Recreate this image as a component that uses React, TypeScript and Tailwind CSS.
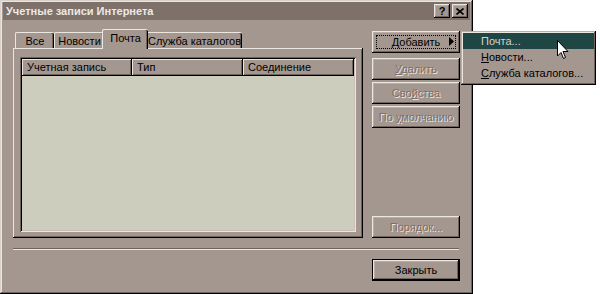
import React from "react";

const raised =
  "shadow-[inset_-1px_-1px_0_#000,inset_1px_1px_0_#ece6e0,inset_-2px_-2px_0_#6f635d,inset_2px_2px_0_#b9ada5]";

const Btn = ({
  children,
  disabled,
  className = "",
}: {
  children: React.ReactNode;
  disabled?: boolean;
  className?: string;
}) => (
  <div
    className={`flex h-[22px] w-[88px] items-center justify-center bg-[#a4978f] ${raised} ${
      disabled
        ? "text-[#7b6f69] [text-shadow:1px_1px_0_#ebe5df]"
        : "text-black"
    } ${className}`}
  >
    {children}
  </div>
);

const Tab = ({ label, w, active }: { label: string; w: string; active?: boolean }) =>
  active ? (
    <div
      className={`relative z-10 -mx-[2px] -mb-px flex h-[20px] items-start justify-center whitespace-nowrap rounded-t-[2px] border-l border-t border-[#ece6e0] bg-[#a4978f] pt-[3px] shadow-[inset_-1px_0_0_#000,inset_-2px_0_0_#6f635d] ${w}`}
    >
      {label}
    </div>
  ) : (
    <div
      className={`flex h-[16px] items-center justify-center whitespace-nowrap rounded-t-[2px] border-l border-t border-[#ece6e0] pt-[1px] shadow-[inset_-1px_0_0_#000,inset_-2px_0_0_#6f635d] ${w}`}
    >
      {label}
    </div>
  );

const HeaderCell = ({ label, w }: { label: string; w: string }) => (
  <div
    className={`flex h-[17px] items-center pl-[5px] shadow-[inset_-1px_-1px_0_#000,inset_1px_1px_0_#ece6e0,inset_-2px_-2px_0_#6f635d] ${w}`}
  >
    {label}
  </div>
);

const App = () => {
  return (
    <div className="flex h-[294px] w-[600px] bg-white font-['Liberation_Sans',Arial,sans-serif] text-[11px] leading-none text-black">
      <div className="relative flex h-[294px] w-[473px] flex-col bg-[#a4978f] shadow-[inset_-1px_-1px_0_#000,inset_1px_1px_0_#d9d2cc,inset_-2px_-2px_0_#6f635d,inset_2px_2px_0_#ece6e0]">
        {/* title bar */}
        <div className="mx-[3px] mt-[2px] flex h-[18px] items-center bg-[#7d716a] pl-[3px] pr-[2px]">
          <span className="text-[11px] font-bold text-[#ede9e5]">Учетные записи Интернета</span>
          <div className="ml-auto flex items-center">
            <div className={`flex h-[14px] w-[16px] items-center justify-center bg-[#a4978f] text-[11px] font-bold ${raised}`}>
              ?
            </div>
            <div className={`ml-[2px] flex h-[14px] w-[16px] items-center justify-center bg-[#a4978f] ${raised}`}>
              <svg width="8" height="7" viewBox="0 0 8 7">
                <path d="M0.5 0.5 L7.5 6.5 M7.5 0.5 L0.5 6.5" stroke="#000" strokeWidth="1.6" />
              </svg>
            </div>
          </div>
        </div>

        {/* body */}
        <div className="flex pl-[13px] pt-[10px]">
          <div className="flex w-[350px] flex-col">
            <div className="flex h-[18px] items-end pl-[2px]">
              <Tab label="Все" w="w-[39px]" />
              <Tab label="Новости" w="w-[50px]" />
              <Tab label="Почта" w="w-[46px]" active />
              <Tab label="Служба каталогов" w="w-[96px]" />
            </div>
            <div className="flex h-[190px] flex-col px-[7px] pb-[6px] pt-[9px] shadow-[inset_-1px_-1px_0_#000,inset_1px_1px_0_#ece6e0,inset_-2px_-2px_0_#6f635d]">
              <div className="flex flex-1 flex-col bg-[#cdcdbd] p-[2px] shadow-[inset_1px_1px_0_#6f635d,inset_-1px_-1px_0_#ece6e0,inset_2px_2px_0_#000,inset_-2px_-2px_0_#c9bfb8]">
                <div className="flex bg-[#a4978f]">
                  <HeaderCell label="Учетная запись" w="w-[110px]" />
                  <HeaderCell label="Тип" w="w-[111px]" />
                  <HeaderCell label="Соединение" w="w-[111px]" />
                </div>
              </div>
            </div>
          </div>

          <div className="ml-[9px] flex h-[208px] flex-col pt-[1px]">
            <Btn className="relative">
              <div className="absolute inset-[4px] border border-dotted border-black" />
              <span>
                <u>Д</u>обавить
              </span>
              <svg className="absolute right-[6px] top-[6px]" width="5" height="9" viewBox="0 0 5 9">
                <path d="M0 0 L5 4.5 L0 9 Z" fill="#000" />
              </svg>
            </Btn>
            <Btn disabled className="mt-[5px]">
              <span>
                <u>У</u>далить
              </span>
            </Btn>
            <Btn disabled className="mt-[2px]">
              <span>
                Сво<u>й</u>ства
              </span>
            </Btn>
            <Btn disabled className="mt-[2px]">
              <span>
                По <u>у</u>молчанию
              </span>
            </Btn>
            <Btn disabled className="mt-auto">
              <span>
                Поря<u>д</u>ок...
              </span>
            </Btn>
          </div>
        </div>

        {/* separator */}
        <div className="ml-[13px] mt-[10px] h-[2px] w-[446px] border-b border-t border-b-[#ece6e0] border-t-[#6f635d]" />

        <div className="mt-[9px] flex justify-end pr-[13px]">
          <div className="border border-black">
            <div className={`flex h-[20px] w-[86px] items-center justify-center bg-[#a4978f] ${raised}`}>
              Закрыть
            </div>
          </div>
        </div>

        {/* popup menu */}
        <div className="absolute left-[461px] top-[31px] z-20 flex w-[135px] flex-col bg-[#a4978f] p-[2px] shadow-[inset_-1px_-1px_0_#000,inset_1px_1px_0_#b9ada5,inset_-2px_-2px_0_#6f635d,inset_2px_2px_0_#ece6e0]">
          <div className="flex h-[16px] items-center bg-[#1f4544] pl-[18px] text-[#d9d3ce]">Почта...</div>
          <div className="flex h-[16px] items-center pl-[18px]">
            <span>
              <u>Н</u>овости...
            </span>
          </div>
          <div className="flex h-[16px] items-center pl-[18px]">
            <span>
              <u>С</u>лужба каталогов...
            </span>
          </div>
          <div className="h-[2px]" />
        </div>

        {/* cursor */}
        <svg className="absolute left-[557px] top-[40px] z-30" width="12" height="20" viewBox="0 0 12 20">
          <path
            d="M0.5 0.5 L0.5 16 L4 12.5 L6.5 18.5 L8.5 17.5 L6 11.5 L11 11.5 Z"
            fill="#fff"
            stroke="#000"
            strokeWidth="1"
          />
        </svg>
      </div>
    </div>
  );
};

export default App;
